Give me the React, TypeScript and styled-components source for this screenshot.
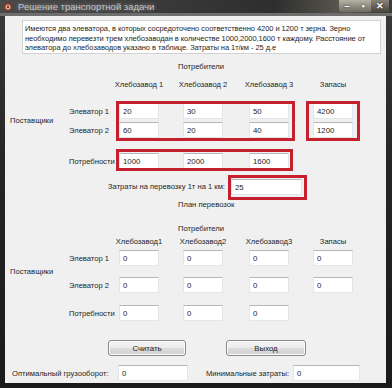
import styled, { createGlobalStyle } from "styled-components";

const GlobalStyle = createGlobalStyle`
  html, body {
    margin: 0;
    padding: 0;
    background: #1c1c1c;
  }
  body {
    font-family: "Liberation Sans", Arial, sans-serif;
    color: #1e1e1e;
  }
`;

const description = [
  "Имеются два элеватора, в которых сосредоточено соответственно 4200 и 1200 т зерна. Зерно",
  "необходимо перевезти трем хлебозаводан в количестве 1000,2000,1600 т каждому. Расстояние от",
  "элеватора до хлебозаводов указано в таблице. Затраты на 1т/км - 25 д.е",
];

const inputHeaders = ["Хлебозавод 1", "Хлебозавод 2", "Хлебозавод 3", "Запасы"];
const planHeaders = ["Хлебозавод1", "Хлебозавод2", "Хлебозавод3", "Запасы"];

const inputRows = [
  { name: "Элеватор 1", values: ["20", "30", "50", "4200"] },
  { name: "Элеватор 2", values: ["60", "20", "40", "1200"] },
];
const inputNeeds = ["1000", "2000", "1600"];

const planRows = [
  { name: "Элеватор 1", values: ["0", "0", "0", "0"] },
  { name: "Элеватор 2", values: ["0", "0", "0", "0"] },
];
const planNeeds = ["0", "0", "0"];

const App = () => {
  return (
    <>
      <GlobalStyle />
      <Window>
        <TitleBar>
          <TitleIcon width="10" height="10" viewBox="0 0 10 10">
            <circle cx="5" cy="5" r="4.5" fill="#7a3a2a" />
            <circle cx="5" cy="5" r="2.6" fill="#d8b89a" />
            <circle cx="5" cy="5" r="1.2" fill="#8a2a1a" />
          </TitleIcon>
          <TitleText>Решение транспортной задачи</TitleText>
          <Controls>
            <Control>&#8211;</Control>
            <Control>&#9642;</Control>
            <Control $close>&#10005;</Control>
          </Controls>
        </TitleBar>
        <Client>
          <Description>
            {description.map((line) => (
              <div key={line}>{line}</div>
            ))}
          </Description>

          <TableGrid $top={8} $rows="18px 23px 19px 31px 16px">
            <GroupTitle $row={1}>Потребители</GroupTitle>
            {inputHeaders.map((h, i) => (
              <ColHeader key={h} $row={2} $col={i + 3}>
                {h}
              </ColHeader>
            ))}
            <SideLabel $row="3 / span 2" $h={35}>
              Поставщики
            </SideLabel>
            {inputRows.map((r, ri) => (
              <RowParts key={r.name} row={ri + 3} name={r.name} values={r.values} />
            ))}
            <RowLabel $row={5} $col={2}>
              Потребности
            </RowLabel>
            {inputNeeds.map((v, i) => (
              <Field key={i} $row={5} $col={i + 3} readOnly value={v} />
            ))}
            <Mark $row="3 / span 2" $col="3 / span 3" $x={-3} $y={-2} $w={179} $h={40} />
            <Mark $row="3 / span 2" $col="6" $x={-7} $y={-2} $w={54} $h={40} />
            <Mark $row="5" $col="3 / span 3" $x={-3} $y={-4} $w={177} $h={22} />
          </TableGrid>

          <CostRow>
            <span>Затраты на перевозку 1т на 1 км:</span>
            <Highlight>
              <CostField readOnly value="25" />
            </Highlight>
          </CostRow>
          <PlanTitle>План перевозок</PlanTitle>

          <TableGrid $top={14} $rows="13px 13px 27px 28px 16px">
            <GroupTitle $row={1}>Потребители</GroupTitle>
            {planHeaders.map((h, i) => (
              <ColHeader key={h} $row={2} $col={i + 3}>
                {h}
              </ColHeader>
            ))}
            <SideLabel $row="3 / span 2" $h={43}>
              Поставщики
            </SideLabel>
            {planRows.map((r, ri) => (
              <RowParts key={r.name} row={ri + 3} name={r.name} values={r.values} />
            ))}
            <RowLabel $row={5} $col={2}>
              Потребности
            </RowLabel>
            {planNeeds.map((v, i) => (
              <Field key={i} $row={5} $col={i + 3} readOnly value={v} />
            ))}
          </TableGrid>

          <Buttons>
            <Button $w={78}>Считать</Button>
            <Button $w={80}>Выход</Button>
          </Buttons>

          <Totals>
            <Total $label={106}>
              <span>Оптимальный грузооборот:</span>
              <TotalField $w={70} readOnly value="0" />
            </Total>
            <Total $label={87}>
              <span>Минимальные затраты:</span>
              <TotalField $w={67} readOnly value="0" />
            </Total>
          </Totals>
        </Client>
      </Window>
    </>
  );
};

const RowParts = ({ row, name, values }: { row: number; name: string; values: string[] }) => (
  <>
    <RowLabel $row={row} $col={2}>
      {name}
    </RowLabel>
    {values.map((v, i) => (
      <Field key={i} $row={row} $col={i + 3} readOnly value={v} />
    ))}
  </>
);

const Window = styled.div`
  width: 392px;
  height: 388px;
  display: flex;
  flex-direction: column;
  background: linear-gradient(180deg, #3a3a3a 0%, #262626 40%, #1a1a1a 100%);
  overflow: hidden;
`;

const TitleBar = styled.div`
  height: 16px;
  flex-shrink: 0;
  display: flex;
  align-items: center;
  padding-left: 3px;
  background: linear-gradient(90deg, #4a4a4a 0%, #3c3c3c 35%, #2e2e2e 70%, #5c5a50 88%, #3a3a3a 100%),
    linear-gradient(180deg, #505050, #2a2a2a);
  box-shadow: inset 0 -3px 0 #6e6e6e;
`;

const TitleIcon = styled.svg`
  flex-shrink: 0;
  margin-top: -2px;
`;

const TitleText = styled.span`
  margin-left: 5px;
  margin-top: -3px;
  font-size: 9.5px;
  color: #c4c4c4;
  text-shadow: 0 0 4px #9a9a9a;
  white-space: nowrap;
`;

const Controls = styled.div`
  margin-left: auto;
  margin-right: 3px;
  margin-top: -4px;
  display: flex;
  height: 12px;
  border-radius: 0 0 3px 3px;
  background: linear-gradient(180deg, #b4b2a4, #6e6c62);
`;

const Control = styled.div<{ $close?: boolean }>`
  width: ${(p) => (p.$close ? 18 : 16)}px;
  display: flex;
  align-items: center;
  justify-content: center;
  font-size: 9px;
  font-weight: bold;
  color: #ffffff;
  text-shadow: 0 0 2px #222;
  background: ${(p) => (p.$close ? "linear-gradient(180deg, #8a8478, #4a463e)" : "transparent")};
`;

const Client = styled.div`
  flex: 1;
  margin: 0 6px 5px 5px;
  background: #f0f0f0;
  font-size: 7.6px;
  display: flex;
  flex-direction: column;
  padding-top: 4px;
`;

const Description = styled.div`
  margin: 0 5px 0 17px;
  height: 34px;
  box-sizing: border-box;
  padding: 3px 2px;
  background: #ffffff;
  border: 1px solid #d2d2d2;
  font-size: 7.5px;
  letter-spacing: -0.05px;
  line-height: 9.6px;
  white-space: nowrap;
  overflow: hidden;
`;

const TableGrid = styled.div<{ $top: number; $rows: string }>`
  display: grid;
  grid-template-columns: 59px 50px 64px 66px 64px 40px;
  grid-template-rows: ${(p) => p.$rows};
  padding-left: 5px;
  margin-top: ${(p) => p.$top}px;
`;

const GroupTitle = styled.div<{ $row: number }>`
  grid-row: ${(p) => p.$row};
  grid-column: 4;
  align-self: start;
  margin-left: -5px;
  line-height: 10px;
  white-space: nowrap;
`;

const ColHeader = styled.div<{ $row: number; $col: number }>`
  grid-row: ${(p) => p.$row};
  grid-column: ${(p) => p.$col};
  align-self: start;
  width: 40px;
  height: 10px;
  line-height: 10px;
  display: flex;
  justify-content: center;
  white-space: nowrap;
`;

const SideLabel = styled.div<{ $row: string; $h: number }>`
  grid-row: ${(p) => p.$row};
  grid-column: 1;
  align-self: start;
  height: ${(p) => p.$h}px;
  display: flex;
  align-items: center;
  white-space: nowrap;
`;

const RowLabel = styled.div<{ $row: number; $col: number }>`
  grid-row: ${(p) => p.$row};
  grid-column: ${(p) => p.$col};
  align-self: start;
  height: 16px;
  display: flex;
  align-items: center;
  white-space: nowrap;
`;

const Field = styled.input<{ $row: number; $col: number }>`
  grid-row: ${(p) => p.$row};
  grid-column: ${(p) => p.$col};
  align-self: start;
  width: 40px;
  height: 16px;
  box-sizing: border-box;
  margin: 0;
  padding: 0 0 0 3px;
  border: 1px solid #e2e6ea;
  border-top-color: #b4b6bb;
  background: #ffffff;
  font-family: inherit;
  font-size: 7.8px;
  color: #1e1e1e;
  outline: none;
`;

const Mark = styled.div<{ $row: string; $col: string; $x: number; $y: number; $w: number; $h: number }>`
  grid-row: ${(p) => p.$row};
  grid-column: ${(p) => p.$col};
  align-self: start;
  justify-self: start;
  margin: ${(p) => p.$y}px 0 0 ${(p) => p.$x}px;
  width: ${(p) => p.$w}px;
  height: ${(p) => p.$h}px;
  box-sizing: border-box;
  border: 3px solid #c4202e;
  z-index: 1;
  pointer-events: none;
`;

const CostRow = styled.div`
  margin-top: 6px;
  height: 25px;
  padding-left: 103px;
  display: flex;
  align-items: center;
  gap: 3px;
  white-space: nowrap;

  & > span {
    margin-top: -2px;
  }
`;

const Highlight = styled.div`
  width: 79px;
  height: 25px;
  box-sizing: border-box;
  border: 3px solid #c4202e;
  padding: 1px 0 0 0;
`;

const CostField = styled.input`
  display: block;
  width: 71px;
  height: 16px;
  box-sizing: border-box;
  margin: 0;
  padding: 0 0 0 3px;
  border: 1px solid #e2e6ea;
  border-top-color: #b4b6bb;
  background: #ffffff;
  font-family: inherit;
  font-size: 7.8px;
  color: #1e1e1e;
  outline: none;
`;

const PlanTitle = styled.div`
  height: 10px;
  line-height: 10px;
  padding-left: 173px;
  white-space: nowrap;
`;

const Buttons = styled.div`
  margin-top: 19px;
  padding-left: 103px;
  display: flex;
  gap: 40px;
`;

const Button = styled.button<{ $w: number }>`
  width: ${(p) => p.$w}px;
  height: 16px;
  margin: 0;
  padding: 0;
  border: 1px solid #8a8a8a;
  border-radius: 3px;
  background: linear-gradient(180deg, #f4f4f4 0%, #ececec 48%, #dcdcdc 52%, #d0d0d0 100%);
  box-shadow: inset 0 0 0 1px #fbfbfb;
  font-family: inherit;
  font-size: 7.8px;
  color: #1e1e1e;
`;

const Totals = styled.div`
  margin-top: 9px;
  padding-left: 7px;
  display: flex;
  gap: 18px;
`;

const Total = styled.div<{ $label: number }>`
  display: flex;
  align-items: center;
  white-space: nowrap;

  & > span {
    width: ${(p) => p.$label}px;
  }
`;

const TotalField = styled.input<{ $w: number }>`
  width: ${(p) => p.$w}px;
  height: 16px;
  box-sizing: border-box;
  margin: 0;
  padding: 0 0 0 3px;
  border: 1px solid #e2e6ea;
  border-top-color: #b4b6bb;
  background: #ffffff;
  font-family: inherit;
  font-size: 7.8px;
  color: #1e1e1e;
  outline: none;
`;

export default App;
